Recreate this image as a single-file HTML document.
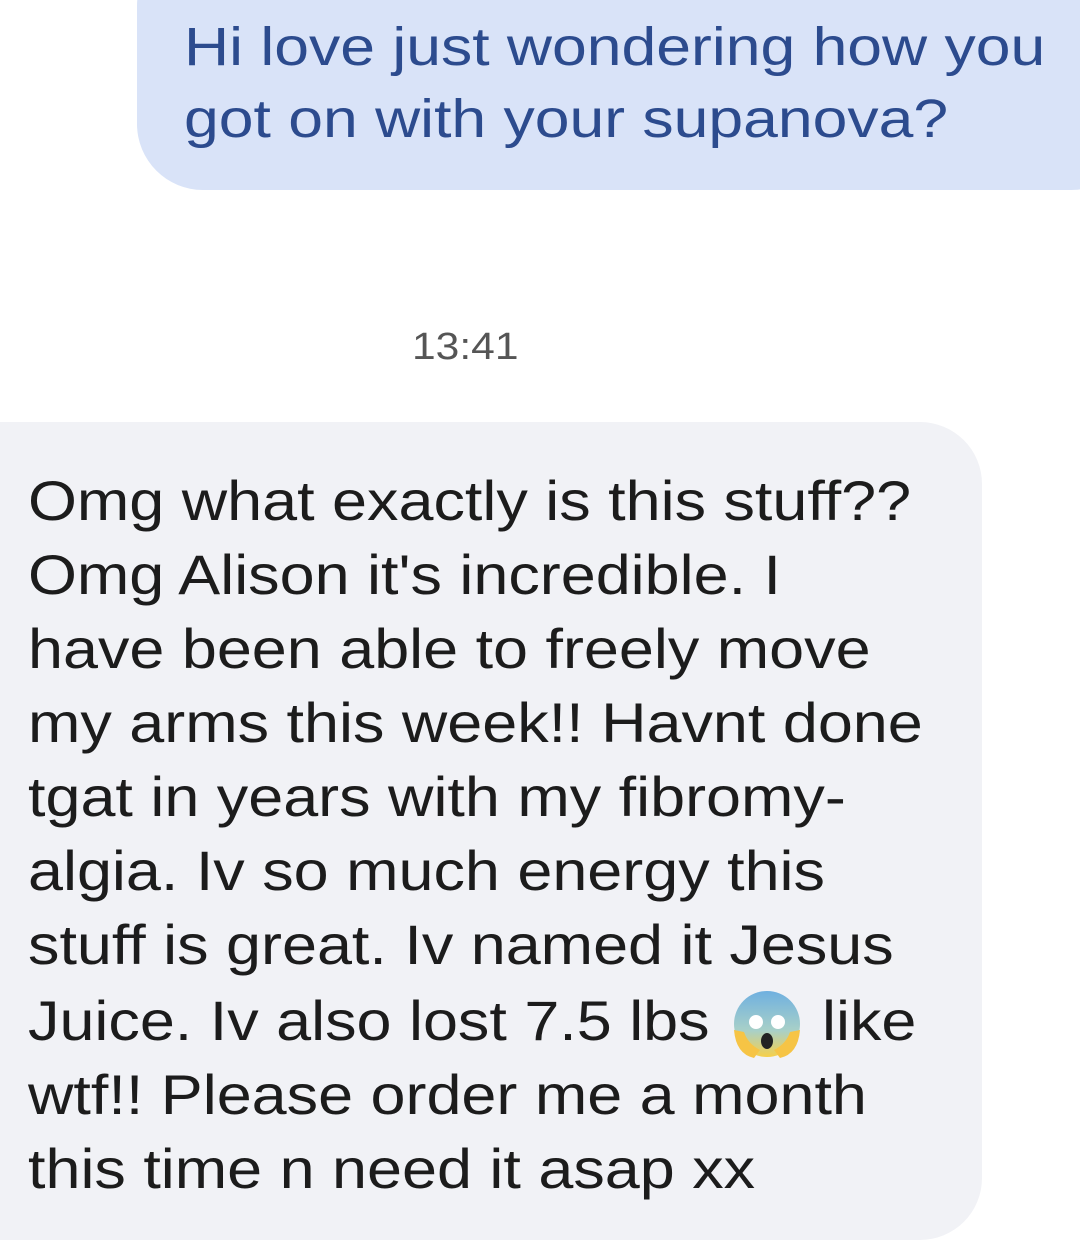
<!DOCTYPE html>
<html><head><meta charset="utf-8"><style>
body{margin:0;width:1080px;height:1254px;background:#fff;position:relative;overflow:hidden;font-family:"Liberation Sans",sans-serif;}
.b1{position:absolute;left:137px;top:-60px;width:1000px;height:250px;background:#d9e3f8;border-radius:66px;}
.t1{position:absolute;left:184px;color:#2c4b8e;font-size:54px;white-space:nowrap;transform:scaleX(1.157);transform-origin:0 0;}
.ts{position:absolute;left:412px;top:326px;font-size:38px;color:#555;transform:scaleX(1.12);transform-origin:0 0;}
.b2{position:absolute;left:-60px;top:422px;width:1042px;height:818px;background:#f1f2f6;border-radius:62px;}
.l{position:absolute;left:28px;font-size:56px;color:#1c1c1c;white-space:nowrap;transform:scaleX(1.123);transform-origin:0 0;}
</style></head><body>
<div class="b1"></div>
<div class="t1" style="top:16px">Hi love just wondering how you</div>
<div class="t1" style="top:88px">got on with your supanova?</div>
<div class="ts">13:41</div>
<div class="b2"></div>
<div class="l" style="top:468px">Omg what exactly is this stuff??</div>
<div class="l" style="top:542px">Omg Alison it's incredible. I</div>
<div class="l" style="top:616px">have been able to freely move</div>
<div class="l" style="top:690px">my arms this week!! Havnt done</div>
<div class="l" style="top:764px">tgat in years with my fibromy-</div>
<div class="l" style="top:838px">algia. Iv so much energy this</div>
<div class="l" style="top:912px">stuff is great. Iv named it Jesus</div>
<div class="l" style="top:988px">Juice. Iv also lost 7.5 lbs</div>
<div class="l" style="top:988px;left:822px">like</div>
<div class="l" style="top:1062px">wtf!! Please order me a month</div>
<div class="l" style="top:1136px">this time n need it asap xx</div>
<svg style="position:absolute;left:730px;top:988px" width="74" height="74" viewBox="0 0 74 74">
<defs><linearGradient id="g" x1="0" y1="0" x2="0" y2="1"><stop offset="0" stop-color="#6fb0e0"/><stop offset="0.6" stop-color="#a8d0c8"/><stop offset="1" stop-color="#f7d04a"/></linearGradient></defs>
<circle cx="37" cy="36" r="33" fill="url(#g)"/>
<circle cx="26" cy="34" r="7" fill="#fff"/><circle cx="48" cy="34" r="7" fill="#fff"/>
<ellipse cx="37" cy="53" rx="6" ry="8" fill="#222"/>
<path d="M4 42 Q6 66 24 70 L30 62 Q18 56 14 44 Z" fill="#f6c445"/>
<path d="M70 42 Q68 66 50 70 L44 62 Q56 56 60 44 Z" fill="#f6c445"/>
</svg>
</body></html>
